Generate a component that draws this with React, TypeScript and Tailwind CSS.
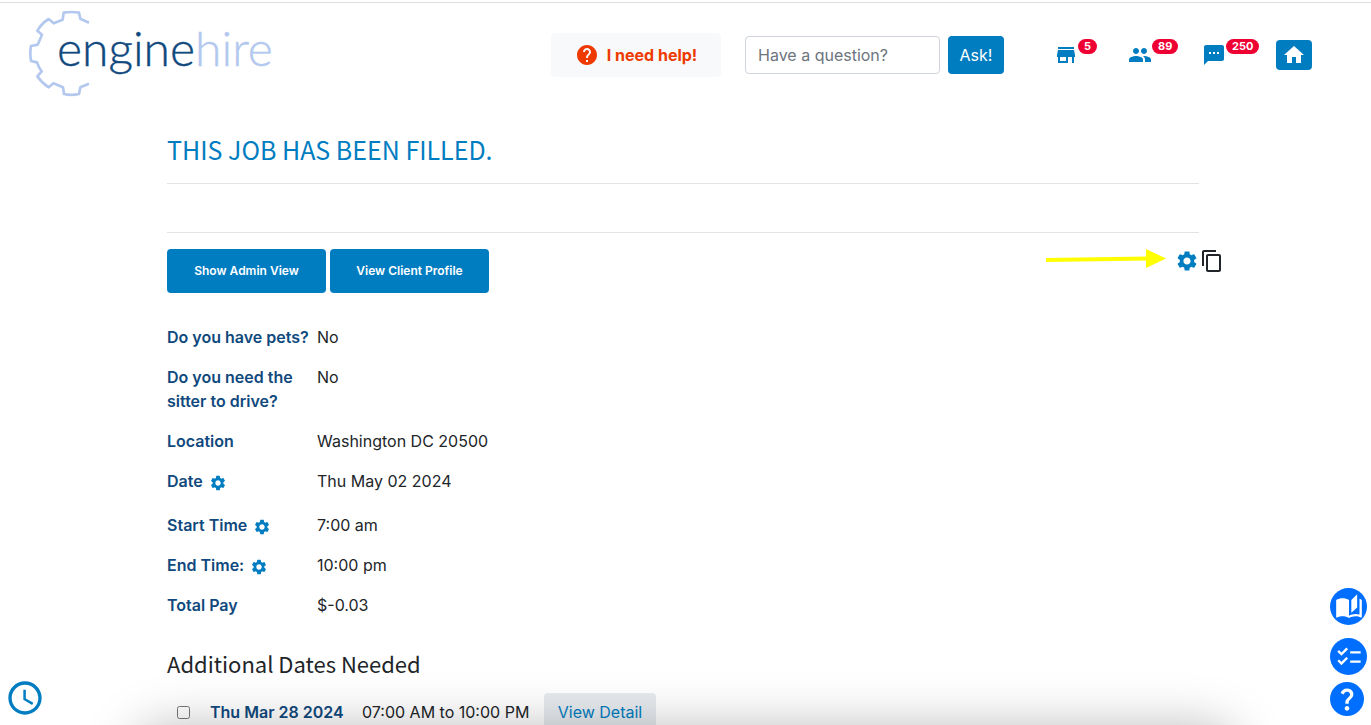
import { useState } from "react";
import {
  MdAccessTime,
  MdAutoStories,
  MdChecklist,
  MdContentCopy,
  MdHelp,
  MdHome,
  MdPeople,
  MdQuestionMark,
  MdSettings,
  MdStore,
  MdTextsms,
} from "react-icons/md";

const navItems = [
  { label: "Store", icon: MdStore, count: 5 },
  { label: "People", icon: MdPeople, count: 89 },
  { label: "Messages", icon: MdTextsms, count: 250 },
];

const details = [
  { label: "Do you have pets?", value: "No" },
  { label: "Do you need the sitter to drive?", value: "No" },
  { label: "Location", value: "Washington DC 20500" },
  { label: "Date", value: "Thu May 02 2024", editable: true, spaced: true },
  { label: "Start Time", value: "7:00 am", editable: true },
  { label: "End Time:", value: "10:00 pm", editable: true },
  { label: "Total Pay", value: "$-0.03" },
];

function Logo() {
  return (
    <svg width="260" height="90" viewBox="0 2 260 90" role="img" aria-label="enginehire">
      <g transform="scale(0.3333) translate(-75 -24)">
        <path
          d="M267 68 L241 56 L237 38 Q214 34 191 38 L188 59 L161 70 L146 57 Q125 70 112 92 L126 104 L113 134 L93 138 Q89 160 93 183 L111 187 Q116 202 125 214 L112 229 Q125 249 146 262 L160 250 L189 262 L192 282 Q214 287 237 282 L241 262 L267 251"
          fill="none"
          stroke="#b3c8ee"
          strokeWidth="8"
          strokeLinejoin="round"
        />
      </g>
      <text x="32" y="58" strokeWidth="0.4" className="font-['Lato'] text-[48px] font-light">
        <tspan fill="#10497d" stroke="#10497d">engine</tspan>
        <tspan fill="#b3c8ee" stroke="#b3c8ee">hire</tspan>
      </text>
    </svg>
  );
}

function Header() {
  const [question, setQuestion] = useState("");

  return (
    <header className="mt-0.5 flex h-[105px] items-center border-t border-[#dedede] pl-[25px] pr-[59px]">
      <a href="#" className="shrink-0">
        <Logo />
      </a>

      <div className="ml-auto flex shrink-0 items-center">
        <button className="mr-6 flex h-11 w-[170px] items-center justify-center gap-2 rounded-sm bg-[#f8f9fb] font-bold text-[#ee3a00]">
          <MdHelp className="size-6" />
          I need help!
        </button>

        <form className="flex gap-2" onSubmit={(e) => e.preventDefault()}>
          <input
            type="text"
            aria-label="Have a question?"
            value={question}
            onChange={(e) => setQuestion(e.target.value)}
            placeholder="Have a question?"
            className="h-[38px] w-[195px] rounded border border-[#ced4da] px-3 outline-none placeholder:text-[#6c757d]"
          />
          <button className="h-[38px] w-14 rounded bg-[#007dc1] text-white">Ask!</button>
        </form>

        <nav className="ml-[50px] flex items-center">
          {navItems.map(({ label, icon: Icon, count }) => (
            <a key={label} href="#" aria-label={label} className="flex h-8 w-[74px] items-start text-[#007dc1]">
              <Icon className="mt-1 size-6" />
              <span className="rounded-full bg-[#ee0033] px-1.5 text-[11px] font-bold leading-[15px] text-white">
                {count}
              </span>
            </a>
          ))}
          <a
            href="#"
            aria-label="Home"
            className="flex h-[30px] w-9 items-center justify-center rounded bg-[#007dc1] text-white"
          >
            <MdHome className="size-6" />
          </a>
        </nav>
      </div>
    </header>
  );
}

function Arrow() {
  return (
    <svg width="120" height="24" viewBox="0 2 120 24" className="mr-[9px]" aria-hidden="true">
      <path d="M0 13 L102 11.5" stroke="#ffff00" strokeWidth="4" />
      <path d="M100 2 L120 11.5 L100 21 Z" fill="#ffff00" />
    </svg>
  );
}

export default function App() {
  return (
    <div className="h-screen overflow-hidden bg-white font-['Inter',sans-serif] text-[16px] leading-6 text-[#212529]">
      <Header />

      <div className="pr-[5px]">
        <main className="mx-auto max-w-[1032px]">
          <h1 className="pt-6 font-['Noto_Sans_CJK_SC',sans-serif] text-[25px] leading-[36px] text-[#007dc1]">
            THIS JOB HAS BEEN FILLED.
          </h1>
          <hr className="mt-4 border-[#e3e3e3]" />
          <hr className="mt-12 border-[#e3e3e3]" />

          <div className="mt-4 flex items-start justify-between">
            <div className="flex gap-1 text-[12px] font-semibold text-white">
              <button className="h-11 w-[159px] rounded bg-[#007dc1]">Show Admin View</button>
              <button className="h-11 w-[159px] rounded bg-[#007dc1]">View Client Profile</button>
            </div>
            <div className="-mr-[25px] flex">
              <Arrow />
              <button aria-label="Job settings" className="text-[#007dc1]">
                <MdSettings className="size-6" />
              </button>
              <button aria-label="Copy job" className="ml-px">
                <MdContentCopy className="size-6" />
              </button>
            </div>
          </div>

          <dl className="mt-8">
            {details.map((row) => (
              <div key={row.label} className={row.spaced ? "mb-5 flex" : "mb-4 flex"}>
                <dt className="w-[150px] shrink-0 font-semibold text-[#10497d]">
                  {row.label}
                  {row.editable && (
                    <button aria-label={`Edit ${row.label}`} className="ml-1.5 align-middle text-[#007dc1]">
                      <MdSettings className="size-[18px]" />
                    </button>
                  )}
                </dt>
                <dd>{row.value}</dd>
              </div>
            ))}
          </dl>

          <h2 className="mt-8 font-['Noto_Sans_CJK_SC',sans-serif] text-[22px] leading-7">
            Additional Dates Needed
          </h2>
          <div className="mt-4 flex h-[38px] items-center">
            <input id="date-0" type="checkbox" className="ml-2.5 size-[13px]" />
            <label htmlFor="date-0" className="ml-5 w-[152px] font-semibold text-[#10497d]">
              Thu Mar 28 2024
            </label>
            <span className="w-[182px]">07:00 AM to 10:00 PM</span>
            <a
              href="#"
              className="flex h-[38px] w-28 items-center justify-center rounded bg-[#e7ebef] text-[#007dc1]"
            >
              View Detail
            </a>
          </div>
        </main>
      </div>

      {/* soft shadow along the bottom edge */}
      <div className="pointer-events-none fixed -bottom-40 left-[130px] right-[130px] h-40 rounded-[40px] shadow-[0_0_50px_rgba(0,0,0,0.25)]" />

      <button aria-label="Time clock" className="fixed bottom-[7px] left-[5px] text-[#007dc1]">
        <MdAccessTime className="size-10" />
      </button>

      <div className="fixed bottom-[9px] right-1 flex flex-col text-white">
        <button
          aria-label="Guides"
          className="mb-[13px] flex size-[37px] items-center justify-center rounded-full bg-[#006eff]"
        >
          <MdAutoStories className="size-7" />
        </button>
        <button
          aria-label="Tasks"
          className="mb-[7px] flex size-[37px] items-center justify-center rounded-full bg-[#006eff]"
        >
          <MdChecklist className="size-7" />
        </button>
        <button aria-label="Help" className="flex size-[34px] items-center justify-center rounded-full bg-[#006eff]">
          <MdQuestionMark className="size-7" />
        </button>
      </div>
    </div>
  );
}
